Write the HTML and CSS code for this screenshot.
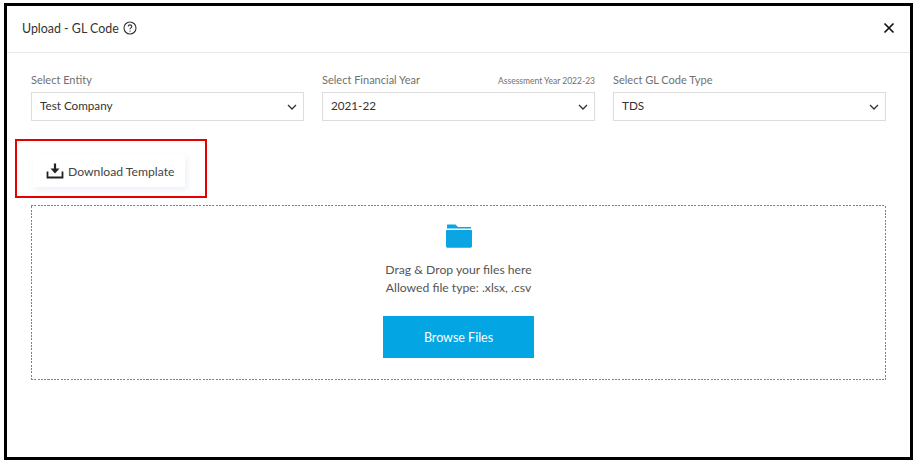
FILE: index.html
```html
<!DOCTYPE html>
<html lang="en">
<head>
<meta charset="utf-8">
<title>Upload - GL Code</title>
<link rel="stylesheet" href="styles.css">
</head>
<body>
<div class="frame">
  <header class="head">
    <h1 class="title">Upload - GL Code</h1>
    <svg class="help" viewBox="0 0 14 14" width="14" height="14"><circle cx="7" cy="7" r="6" fill="none" stroke="#333" stroke-width="1.100"/><path d="M5.200 5.600c0-1 .8-1.700 1.800-1.700s1.800.7 1.800 1.600c0 1.300-1.800 1.400-1.800 2.700" fill="none" stroke="#333" stroke-width="1.100"/><circle cx="7" cy="10.100" r=".7" fill="#333"/></svg>
    <svg class="close" viewBox="0 0 12 12" width="12" height="12"><path d="M1.500 1.500l9 9M10.500 1.500l-9 9" fill="none" stroke="#111" stroke-width="1.700"/></svg>
  </header>
  <section class="fields">
    <div class="field">
      <div class="label-row"><span class="label">Select Entity</span></div>
      <div class="select"><span>Test Company</span><svg class="chev" viewBox="0 0 10 6" width="10" height="6"><path d="M1 1l4 4 4-4" fill="none" stroke="#333" stroke-width="1.300"/></svg></div>
    </div>
    <div class="field">
      <div class="label-row"><span class="label">Select Financial Year</span><span class="hint">Assessment Year 2022-23</span></div>
      <div class="select"><span>2021-22</span><svg class="chev" viewBox="0 0 10 6" width="10" height="6"><path d="M1 1l4 4 4-4" fill="none" stroke="#333" stroke-width="1.300"/></svg></div>
    </div>
    <div class="field">
      <div class="label-row"><span class="label">Select GL Code Type</span></div>
      <div class="select"><span>TDS</span><svg class="chev" viewBox="0 0 10 6" width="10" height="6"><path d="M1 1l4 4 4-4" fill="none" stroke="#333" stroke-width="1.300"/></svg></div>
    </div>
  </section>
  <div class="actions">
    <button class="download" type="button">
      <svg viewBox="0 0 18 16" width="18" height="16"><path d="M9 .5v7" stroke="#222" stroke-width="2.200" fill="none"/><path d="M4.500 5.500h9L9 10.500z" fill="#222"/><path d="M1.500 8.500v6h15v-6" stroke="#222" stroke-width="1.800" fill="none"/></svg>
      <span>Download Template</span>
    </button>
  </div>
  <section class="drop">
    <svg class="folder" viewBox="0 0 26 24" width="26" height="24"><path d="M1 1.500C1 .9 1.400.5 2 .5h7.500L12 3h13v1.600H1z" fill="#0aa5e2"/><path d="M0 7c0-.6.4-1 1-1h24c.6 0 1 .4 1 1v15c0 1-.8 1.800-1.800 1.800H1.800C.8 23.800 0 23 0 22z" fill="#0aa5e2"/></svg>
    <p class="drop-text">Drag &amp; Drop your files here</p>
    <p class="drop-text">Allowed file type: .xlsx, .csv</p>
    <button class="browse" type="button">Browse Files</button>
  </section>
  <div class="callout"></div>
</div>
</body>
</html>
```

FILE: styles.css
```css
* { box-sizing: border-box; }
html, body { margin: 0; padding: 0; background: #fff; }
body { width: 915px; height: 460px; overflow: hidden; padding: 3px 2px 0 4px; font-family: "Lato", "Liberation Sans", sans-serif; color: #333; }
.frame { position: relative; width: 909px; height: 457px; border: 3px solid #000; background: #fff; }
.head { display: flex; align-items: center; height: 47px; padding: 0 15px 2px; border-bottom: 1px solid #e9e9e9; }
.title { margin: 0; font-size: 12.400px; font-weight: 400; color: #333; }
.help { margin-left: 4px; }
.close { margin-left: auto; }
.fields { display: grid; grid-template-columns: repeat(3, 273px); column-gap: 18px; padding: 20px 24px 0; }
.label-row { display: flex; justify-content: space-between; align-items: baseline; height: 19px; }
.label { font-size: 11px; color: #707070; }
.hint { font-size: 8.500px; color: #707070; }
.select { display: flex; align-items: center; justify-content: space-between; height: 29px; padding: 0 6px 3px 8px; border: 1px solid #ddd; font-size: 11.700px; color: #333; }
.chev { margin-top: 3px; }
.actions { height: 84px; padding: 34px 0 0 26px; }
.download { display: flex; align-items: center; gap: 4px; width: 152px; height: 32px; padding: 0 0 0 13px; border: 0; background: #fff; font: inherit; font-size: 12.200px; color: #444; box-shadow: 2px 3px 6px rgba(120,150,190,.14); }
.drop {
  display: flex; flex-direction: column; align-items: center; width: 855px; height: 175px; margin-left: 24px; padding-top: 19px;
  background:
    repeating-linear-gradient(90deg, #808080 0 2px, transparent 2px 3.300px) top / 100% 1px no-repeat,
    repeating-linear-gradient(90deg, #808080 0 2px, transparent 2px 3.300px) bottom / 100% 1px no-repeat,
    repeating-linear-gradient(0deg, #808080 0 2px, transparent 2px 3.300px) left / 1px 100% no-repeat,
    repeating-linear-gradient(0deg, #808080 0 2px, transparent 2px 3.300px) right / 1px 100% no-repeat;
}
.folder { margin-bottom: 13px; }
.drop-text { margin: 0; height: 18px; line-height: 18px; font-size: 12.200px; color: #555; }
.browse { width: 151px; height: 42px; margin-top: 19px; border: 0; background: #03a6e3; color: #fff; font: inherit; font-size: 12.500px; }
.callout { position: absolute; left: 8px; top: 133px; width: 192px; height: 59px; border: 2px solid #e60000; }
```
